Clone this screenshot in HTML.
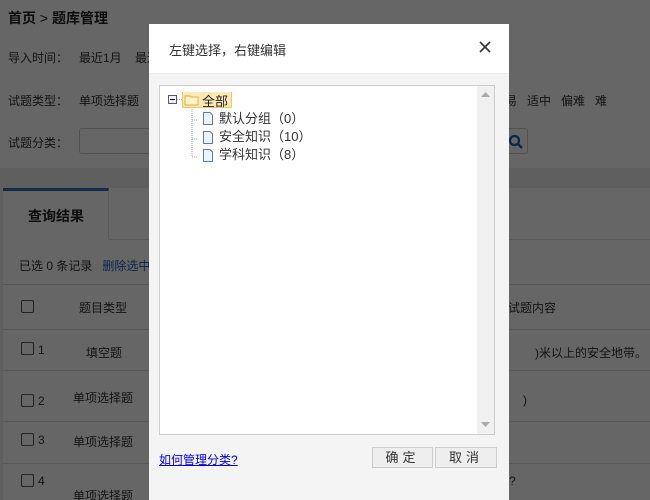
<!DOCTYPE html>
<html><head><meta charset="utf-8"><style>
*{margin:0;padding:0;box-sizing:border-box}
html,body{width:650px;height:500px;overflow:hidden}
body{position:relative;background:#eee;font-family:"Liberation Sans","Noto Sans CJK SC",sans-serif;font-size:12px;color:#333}
.a{position:absolute;white-space:nowrap}
.top{position:absolute;left:0;top:0;width:650px;height:168px;background:#fff}
.main{position:absolute;left:3px;top:188px;width:647px;height:312px;background:#fff}
.hl{position:absolute;left:3px;width:647px;height:1px;background:#ddd}
.cb{position:absolute;width:13px;height:13px;border:1px solid #555;border-radius:2px}
.ov{position:absolute;left:0;top:0;width:650px;height:500px;background:rgba(0,0,0,.6)}
.dlg{position:absolute;left:149px;top:24px;width:360px;height:476px;background:#f4f4f4}
.btn{position:absolute;top:423px;height:21px;border:1px solid #ccc;background:#eee;font-size:13px;text-align:center;line-height:19px;letter-spacing:4px;color:#333}
</style></head><body>
<div class="top"></div>
<div class="a" style="left:8px;top:8px;font-size:14px;font-weight:bold;color:#222">首页 <span style="font-weight:normal">&gt;</span> 题库管理</div>
<div class="a" style="left:8px;top:49px">导入时间：</div>
<div class="a" style="left:79px;top:49px">最近1月 &nbsp;&nbsp;&nbsp;最近3月</div>
<div class="a" style="left:8px;top:92px">试题类型：</div>
<div class="a" style="left:79px;top:92px">单项选择题</div>
<div class="a" style="left:505px;top:92px">易 &nbsp;&nbsp;适中 &nbsp;&nbsp;偏难 &nbsp;&nbsp;难</div>
<div class="a" style="left:8px;top:134px">试题分类：</div>
<div class="a" style="left:79px;top:128px;width:80px;height:26px;border:1px solid #ccc;border-radius:3px"></div>
<div class="a" style="left:500px;top:128px;width:28px;height:26px;border:1px solid #ccc;border-radius:3px"></div>
<svg class="a" style="left:508px;top:134px" width="16" height="16"><circle cx="6.5" cy="6.5" r="4.5" fill="none" stroke="#1e5fb4" stroke-width="2.2"/><line x1="10" y1="10" x2="14" y2="14" stroke="#1e5fb4" stroke-width="2.5"/></svg>
<div class="main"></div>
<div class="a" style="left:3px;top:188px;width:106px;height:51px;border-top:3px solid #2a6fb8;border-right:1px solid #ddd;background:#fff"></div>
<div class="hl" style="top:239px;left:109px;width:541px"></div>
<div class="a" style="left:28px;top:206px;font-size:14px;font-weight:bold;color:#222">查询结果</div>
<div class="a" style="left:19px;top:257px">已选 0 条记录 &nbsp;&nbsp;<span style="color:#1e5fb4">删除选中</span></div>
<div class="hl" style="top:284px"></div>
<div class="hl" style="top:329px"></div>
<div class="hl" style="top:370px"></div>
<div class="hl" style="top:421px"></div>
<div class="hl" style="top:463px"></div>
<div class="cb" style="left:21px;top:300px"></div>
<div class="a" style="left:79px;top:299px">题目类型</div>
<div class="a" style="left:508px;top:299px">试题内容</div>
<div class="cb" style="left:21px;top:342px"></div><div class="a" style="left:38px;top:343px">1</div><div class="a" style="left:86px;top:344px">填空题</div><div class="a" style="left:535px;top:344px">)米以上的安全地带。</div>
<div class="cb" style="left:21px;top:394px"></div><div class="a" style="left:38px;top:394px">2</div><div class="a" style="left:73px;top:389px">单项选择题</div><div class="a" style="left:523px;top:393px">)</div>
<div class="cb" style="left:21px;top:433px"></div><div class="a" style="left:38px;top:433px">3</div><div class="a" style="left:73px;top:433px">单项选择题</div>
<div class="cb" style="left:21px;top:474px"></div><div class="a" style="left:38px;top:474px">4</div><div class="a" style="left:73px;top:487px">单项选择题</div><div class="a" style="left:509px;top:474px">?</div>
<div class="ov"></div>
<div class="dlg">
 <div class="a" style="left:0;top:0;width:360px;height:50px;background:#fff;border-bottom:1px solid #eaeaea"></div>
 <div class="a" style="left:20px;top:16px;font-size:13px;color:#333">左键选择，右键编辑</div>
 <svg class="a" style="left:330px;top:17px" width="12" height="12"><path d="M1 1L11 11M11 1L1 11" stroke="#333" stroke-width="1.6"/></svg>
 <div class="a" style="left:10px;top:61px;width:336px;height:350px;background:#fff;border:1px solid #ccc"></div>
 <div class="a" style="left:328px;top:62px;width:17px;height:348px;background:#f0f0f0"></div>
 <svg class="a" style="left:332px;top:68px" width="9" height="6"><path d="M0 5L4.5 0L9 5Z" fill="#aaa"/></svg>
 <svg class="a" style="left:332px;top:398px" width="9" height="6"><path d="M0 0L4.5 5L9 0Z" fill="#aaa"/></svg>
 <svg class="a" style="left:18px;top:68px" width="150" height="70">
  <rect x="1.5" y="3.5" width="8" height="8" fill="#eef" stroke="#557"/><line x1="3" y1="7.5" x2="8" y2="7.5" stroke="#000"/>
  <path d="M10 7.5H15M25 13V65M25 28H31M25 47H31M25 65H31" stroke="#aaa" stroke-dasharray="1 1"/>
  <rect x="15.5" y="-0.5" width="49" height="16" fill="#fde8b8" stroke="#f5c26a" rx="1"/>
  <path d="M18 4H23L24 5H31V13H18Z" fill="#fff3c2" stroke="#d6b04a"/>
  <g fill="#eef4fc" stroke="#5a79b0"><path d="M36.5 20.5H43L45.5 23V32.5H36.5Z"/><path d="M36.5 39.5H43L45.5 42V51.5H36.5Z"/><path d="M36.5 57.5H43L45.5 60V69.5H36.5Z"/></g>
 </svg>
 <div class="a" style="left:53px;top:67px;font-size:13px;color:#222">全部</div>
 <div class="a" style="left:70px;top:84px;font-size:13px;color:#333">默认分组（0）</div>
 <div class="a" style="left:70px;top:102px;font-size:13px;color:#333">安全知识（10）</div>
 <div class="a" style="left:70px;top:120px;font-size:13px;color:#333">学科知识（8）</div>
 <div class="a" style="left:10px;top:427px;color:#00e;text-decoration:underline">如何管理分类?</div>
 <div class="btn" style="left:223px;width:61px">确定</div>
 <div class="btn" style="left:286px;width:62px">取消</div>
</div>
</body></html>
